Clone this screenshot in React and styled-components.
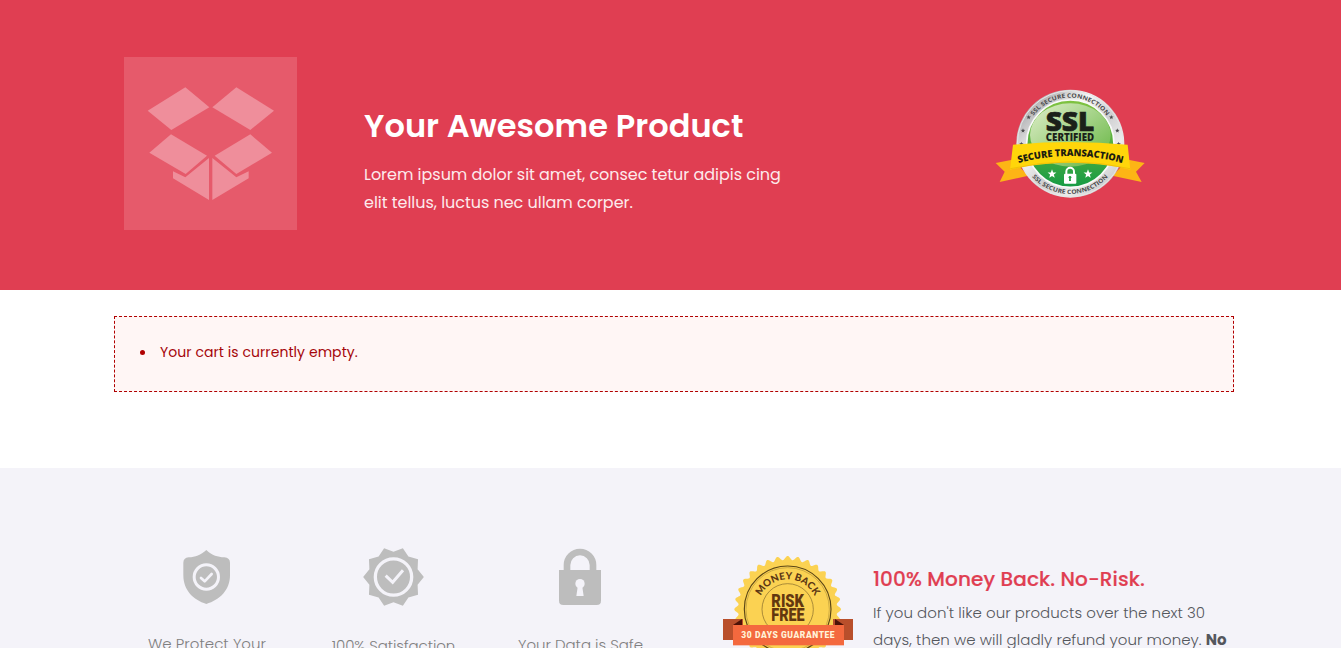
import React from 'react';
import styled, { createGlobalStyle } from 'styled-components';

const GlobalStyle = createGlobalStyle`
  * { box-sizing: border-box; }
  body {
    margin: 0;
    background: #fff;
    font-family: Poppins, Inter, "Liberation Sans", sans-serif;
  }
`;

const Page = styled.div`
  height: 648px;
  overflow: hidden;
`;

const Hero = styled.header`
  height: 290px;
  padding: 57px 0 0 124px;
  display: flex;
  align-items: flex-start;
  background: #e03e52;
`;

const ProductTile = styled.div`
  width: 173px;
  height: 173px;
  flex: none;
  background: #e65a6b;
`;

const HeroText = styled.div`
  width: 440px;
  margin: 45px 0 0 67px;
  flex: none;
  color: #fff;
`;

const Title = styled.h1`
  margin: 0 0 11px;
  font-size: 32px;
  line-height: 48px;
  font-weight: 600;
  letter-spacing: 0.06px;
  white-space: nowrap;
`;

const Tagline = styled.p`
  margin: 0;
  font-size: 16px;
  line-height: 28px;
  letter-spacing: -0.03px;
  color: #fdeaec;
  white-space: nowrap;
`;

const SslSeal = styled.svg`
  width: 150px;
  height: 110px;
  margin: 32px 0 0 191px;
  flex: none;
`;

const Main = styled.main`
  height: 178px;
  padding: 26px 0 0 114px;
`;

const ErrorBox = styled.ul`
  width: 1120px;
  height: 76px;
  margin: 0;
  padding: 25px;
  border: 1px dashed #b00000;
  background: #fff6f5;
  list-style: none;
`;

const ErrorItem = styled.li`
  display: flex;
  align-items: center;
  gap: 15px;
  height: 21px;
  font-size: 14px;
  letter-spacing: 0.07px;
  color: #a5050a;
  white-space: nowrap;

  &::before {
    content: '';
    width: 5px;
    height: 5px;
    border-radius: 50%;
    background: #b00000;
  }
`;

const Footer = styled.footer`
  height: 260px;
  padding: 76px 0 0 114px;
  display: flex;
  align-items: flex-start;
  background: #f4f3f9;
`;

const Features = styled.div`
  display: grid;
  grid-template-columns: 186px 187px 187px;
  flex: none;
`;

const Feature = styled.div`
  display: flex;
  flex-direction: column;
  align-items: center;
`;

const FeatureIcon = styled.svg`
  height: 64px;
`;

const FeatureLabel = styled.div`
  margin-top: ${(p) => p.$top}px;
  font-size: 15px;
  line-height: 26px;
  font-weight: 300;
  letter-spacing: ${(p) => p.$spacing};
  color: #808080;
  white-space: nowrap;
`;

const GuaranteeSeal = styled.svg`
  width: 130px;
  height: 92px;
  margin: 12px 20px 0 49px;
  flex: none;
`;

const Guarantee = styled.div`
  margin-top: 20px;
`;

const GuaranteeTitle = styled.h2`
  margin: 0 0 5px;
  font-size: 20px;
  line-height: 30px;
  font-weight: 500;
  letter-spacing: 0.12px;
  color: #e03e52;
  -webkit-text-stroke: 0.2px #e03e52;
  white-space: nowrap;
`;

const GuaranteeLine = styled.div`
  font-size: 15px;
  line-height: 27px;
  font-weight: 300;
  letter-spacing: 0.04px;
  color: #54575d;
  white-space: nowrap;

  strong { font-weight: 700; }
`;

const starPath = (cx, cy, r) => {
  const pts = [];
  for (let i = 0; i < 10; i++) {
    const a = (i * Math.PI) / 5;
    const k = i % 2 ? r * 0.42 : r;
    pts.push(`${(cx + k * Math.sin(a)).toFixed(1)},${(cy - k * Math.cos(a)).toFixed(1)}`);
  }
  return pts.join(' ');
};

const burst = (cx, cy, outer, inner, n) => {
  const pts = [];
  for (let i = 0; i < n * 2; i++) {
    const a = (i * Math.PI) / n;
    const r = i % 2 ? outer : inner;
    pts.push(`${(cx + r * Math.sin(a)).toFixed(1)},${(cy - r * Math.cos(a)).toFixed(1)}`);
  }
  return pts.join(' ');
};

const scallop = (cx, cy, base, amp, n) => {
  const pts = [];
  for (let i = 0; i < 720; i++) {
    const a = (i * Math.PI) / 360;
    const r = base + amp * Math.cos(n * a);
    pts.push(`${(cx + r * Math.sin(a)).toFixed(1)},${(cy - r * Math.cos(a)).toFixed(1)}`);
  }
  return pts.join(' ');
};

const BoxLogo = () => (
  <svg width="173" height="173" viewBox="30 30 519 519" fill="#ef8e9b" display="block">
    <path d="M214 121L286 181L172 249L101 191Z" />
    <path d="M367 121L480 191L409 249L295 181Z" />
    <path d="M171 262L279 326L215 381L106 317Z" />
    <path d="M409 262L474 317L367 381L302 326Z" />
    <path d="M285 333V459L177 394V373L214 391Z" />
    <path d="M295 333V459L404 394V373L367 391Z" />
  </svg>
);

const Ssl = () => (
  <SslSeal viewBox="30 27 450 330">
    <defs>
      <linearGradient id="silver" x1="0" y1="0" x2="1" y2="1">
        <stop offset="0" stopColor="#b5b5b7" />
        <stop offset=".18" stopColor="#bcbcbe" />
        <stop offset=".36" stopColor="#f6f6f6" />
        <stop offset=".55" stopColor="#cfcfd1" />
        <stop offset=".72" stopColor="#ececec" />
        <stop offset="1" stopColor="#b0b0b2" />
      </linearGradient>
      <linearGradient id="green" x1="0" y1="0" x2="0" y2="1">
        <stop offset="0" stopColor="#80c341" />
        <stop offset=".5" stopColor="#55af3e" />
        <stop offset="1" stopColor="#169b45" />
      </linearGradient>
      <linearGradient id="shine" x1="0" y1="0" x2="1" y2="1">
        <stop offset="0" stopColor="#e1efcb" />
        <stop offset="1" stopColor="#62b43e" />
      </linearGradient>
      <path id="sslTop" d="M117 191A138 138 0 0 1 393 191" />
      <path id="sslBottom" d="M104 191A151 151 0 0 0 406 191" />
      <path id="sslBand" d="M98 250Q257 206 415 250" />
    </defs>
    <path d="M32 249L82 239L130 287L44 306L59 275Z" fill="#fdb515" />
    <path d="M479 249L430 239L382 287L470 306L453 275Z" fill="#fdb515" />
    <circle cx="256" cy="191" r="162" fill="url(#silver)" />
    <circle cx="256" cy="191" r="159" fill="none" stroke="#e6e6e6" strokeWidth="3" />
    <circle cx="256" cy="191" r="131" fill="url(#green)" stroke="#fafafa" strokeWidth="5" />
    <ellipse cx="256" cy="165" rx="121" ry="95" fill="url(#shine)" />
    <g fontFamily="Open Sans, sans-serif" fontWeight="700" fill="#4b4b4d" fontSize="18">
      <text textAnchor="middle"><textPath href="#sslTop" startOffset="50%" textLength="254" lengthAdjust="spacingAndGlyphs">SSL SECURE CONNECTION</textPath></text>
      <text textAnchor="middle"><textPath href="#sslBottom" startOffset="50%" textLength="258" lengthAdjust="spacingAndGlyphs">SSL SECURE CONNECTION</textPath></text>
    </g>
    <g fill="#4b4b4d">
      <polygon points={starPath(131, 112, 7)} />
      <polygon points={starPath(114, 152, 7)} />
      <polygon points={starPath(109, 192, 7)} />
      <polygon points={starPath(379, 112, 7)} />
      <polygon points={starPath(397, 152, 7)} />
      <polygon points={starPath(401, 192, 7)} />
    </g>
    <g fontFamily="Open Sans, sans-serif" fill="#1b2119" textAnchor="middle">
      <text x="255" y="153" fontSize="78" fontWeight="800" textLength="146" lengthAdjust="spacingAndGlyphs" stroke="#1b2119" strokeWidth="2">SSL</text>
      <text x="255" y="182" fontSize="32" fontWeight="800" textLength="145" lengthAdjust="spacingAndGlyphs">CERTIFIED</text>
    </g>
    <path d="M84 194Q257 178 428 194L436 269Q257 228 75 269Z" fill="#ffd60a" />
    <path d="M76 266Q257 225 435 266" fill="none" stroke="#ecb708" strokeWidth="2" />
    <text fontFamily="Open Sans, sans-serif" fontWeight="800" fontSize="29" fill="#1d1d10" textAnchor="middle">
      <textPath href="#sslBand" startOffset="50%" textLength="316" lengthAdjust="spacingAndGlyphs">SECURE TRANSACTION</textPath>
    </text>
    <g fill="#fff">
      <polygon points={starPath(201, 282, 14)} />
      <polygon points={starPath(309, 282, 14)} />
      <rect x="237" y="281" width="37" height="30" rx="3" />
    </g>
    <path d="M244 284V275A11 11 0 0 1 267 275V284" fill="none" stroke="#fff" strokeWidth="6" />
    <circle cx="255" cy="292" r="4" fill="#249d43" />
    <path d="M253 292H257L258 303H252Z" fill="#249d43" />
  </SslSeal>
);

const MoneyBack = () => (
  <GuaranteeSeal viewBox="24 33 390 276">
    <defs>
      <path id="moneyArc" d="M128 193A90 90 0 0 1 308 193" />
    </defs>
    <polygon points={scallop(218, 193, 154, 6, 32)} fill="#fbd252" />
    <circle cx="218" cy="193" r="130" fill="none" stroke="#5b4616" strokeWidth="3.5" />
    <circle cx="218" cy="193" r="125" fill="none" stroke="#a58635" strokeWidth="1.5" />
    <circle cx="218" cy="193" r="77" fill="none" stroke="#80662a" strokeWidth="2" />
    <text fontFamily="Lato, sans-serif" fontWeight="900" fontSize="30" fill="#5d3714" textAnchor="middle">
      <textPath href="#moneyArc" startOffset="50%" textLength="200">MONEY BACK</textPath>
    </text>
    <g fontFamily="Roboto, sans-serif" fontWeight="900" fontSize="53" fill="#63370f" textAnchor="middle">
      <text x="218" y="186" textLength="98" lengthAdjust="spacingAndGlyphs">RISK</text>
      <text x="219" y="228" textLength="100" lengthAdjust="spacingAndGlyphs">FREE</text>
    </g>
    <path d="M24 222H84V285H24Z" fill="#b94f2b" />
    <path d="M354 222H414V285H354Z" fill="#b94f2b" />
    <path d="M54 240L81 222V240Z" fill="#4d1208" />
    <path d="M387 240L360 222V240Z" fill="#4d1208" />
    <rect x="54" y="240" width="333" height="61" fill="#f4693e" />
    <g transform="translate(219 279) scale(0.88 1)">
      <text fontFamily="Roboto, sans-serif" fontWeight="900" fontSize="29" fill="#fff3d8" textAnchor="middle" textLength="318">30 DAYS GUARANTEE</text>
    </g>
  </GuaranteeSeal>
);

const GREY = '#bdbdbd';
const PALE = '#f4f3f9';

const ShieldIcon = () => (
  <FeatureIcon width="64" viewBox="120 18 192 192">
    <path d="M214 36C232 53 248 57 268 58Q285 60 285 74V112C285 157 254 186 214 198C175 186 145 157 145 112V74Q145 60 161 58C181 57 197 52 214 36Z" fill={GREY} />
    <circle cx="214" cy="117" r="36.5" fill="none" stroke={PALE} strokeWidth="9" />
    <path d="M198 120L209 130L230 108" fill="none" stroke={PALE} strokeWidth="8" strokeLinecap="round" strokeLinejoin="round" />
  </FeatureIcon>
);

const BurstIcon = () => (
  <FeatureIcon width="65" viewBox="123 18 195 192">
    <polygon points={burst(220.5, 117, 91, 76, 10)} fill={GREY} />
    <circle cx="220.5" cy="117" r="54.5" fill="none" stroke={PALE} strokeWidth="10" />
    <path d="M197 113L218 133L249 97" fill="none" stroke={PALE} strokeWidth="9" />
  </FeatureIcon>
);

const LockIcon = () => (
  <FeatureIcon width="65" viewBox="129 18 195 192">
    <path d="M186 100V81A39 39 0 0 1 264 81V100" fill="none" stroke={GREY} strokeWidth="20" />
    <path d="M162 96H288V188Q288 201 275 201H175Q162 201 162 188Z" fill={GREY} />
    <circle cx="225" cy="137" r="14" fill={PALE} />
    <path d="M219 140H231L236 174H214Z" fill={PALE} />
  </FeatureIcon>
);

export default function App() {
  return (
    <Page>
      <GlobalStyle />
      <Hero>
        <ProductTile><BoxLogo /></ProductTile>
        <HeroText>
          <Title>Your Awesome Product</Title>
          <Tagline>Lorem ipsum dolor sit amet, consec tetur adipis cing</Tagline>
          <Tagline>elit tellus, luctus nec ullam corper.</Tagline>
        </HeroText>
        <Ssl />
      </Hero>
      <Main>
        <ErrorBox>
          <ErrorItem>Your cart is currently empty.</ErrorItem>
        </ErrorBox>
      </Main>
      <Footer>
        <Features>
          <Feature>
            <ShieldIcon />
            <FeatureLabel $top={23} $spacing="0.03px">We Protect Your</FeatureLabel>
          </Feature>
          <Feature>
            <BurstIcon />
            <FeatureLabel $top={25} $spacing="-0.1px">100% Satisfaction</FeatureLabel>
          </Feature>
          <Feature>
            <LockIcon />
            <FeatureLabel $top={24} $spacing="-0.03px">Your Data is Safe</FeatureLabel>
          </Feature>
        </Features>
        <MoneyBack />
        <Guarantee>
          <GuaranteeTitle>100% Money Back. No-Risk.</GuaranteeTitle>
          <GuaranteeLine>If you don't like our products over the next 30</GuaranteeLine>
          <GuaranteeLine>days, then we will gladly refund your money. <strong>No</strong></GuaranteeLine>
        </Guarantee>
      </Footer>
    </Page>
  );
}
